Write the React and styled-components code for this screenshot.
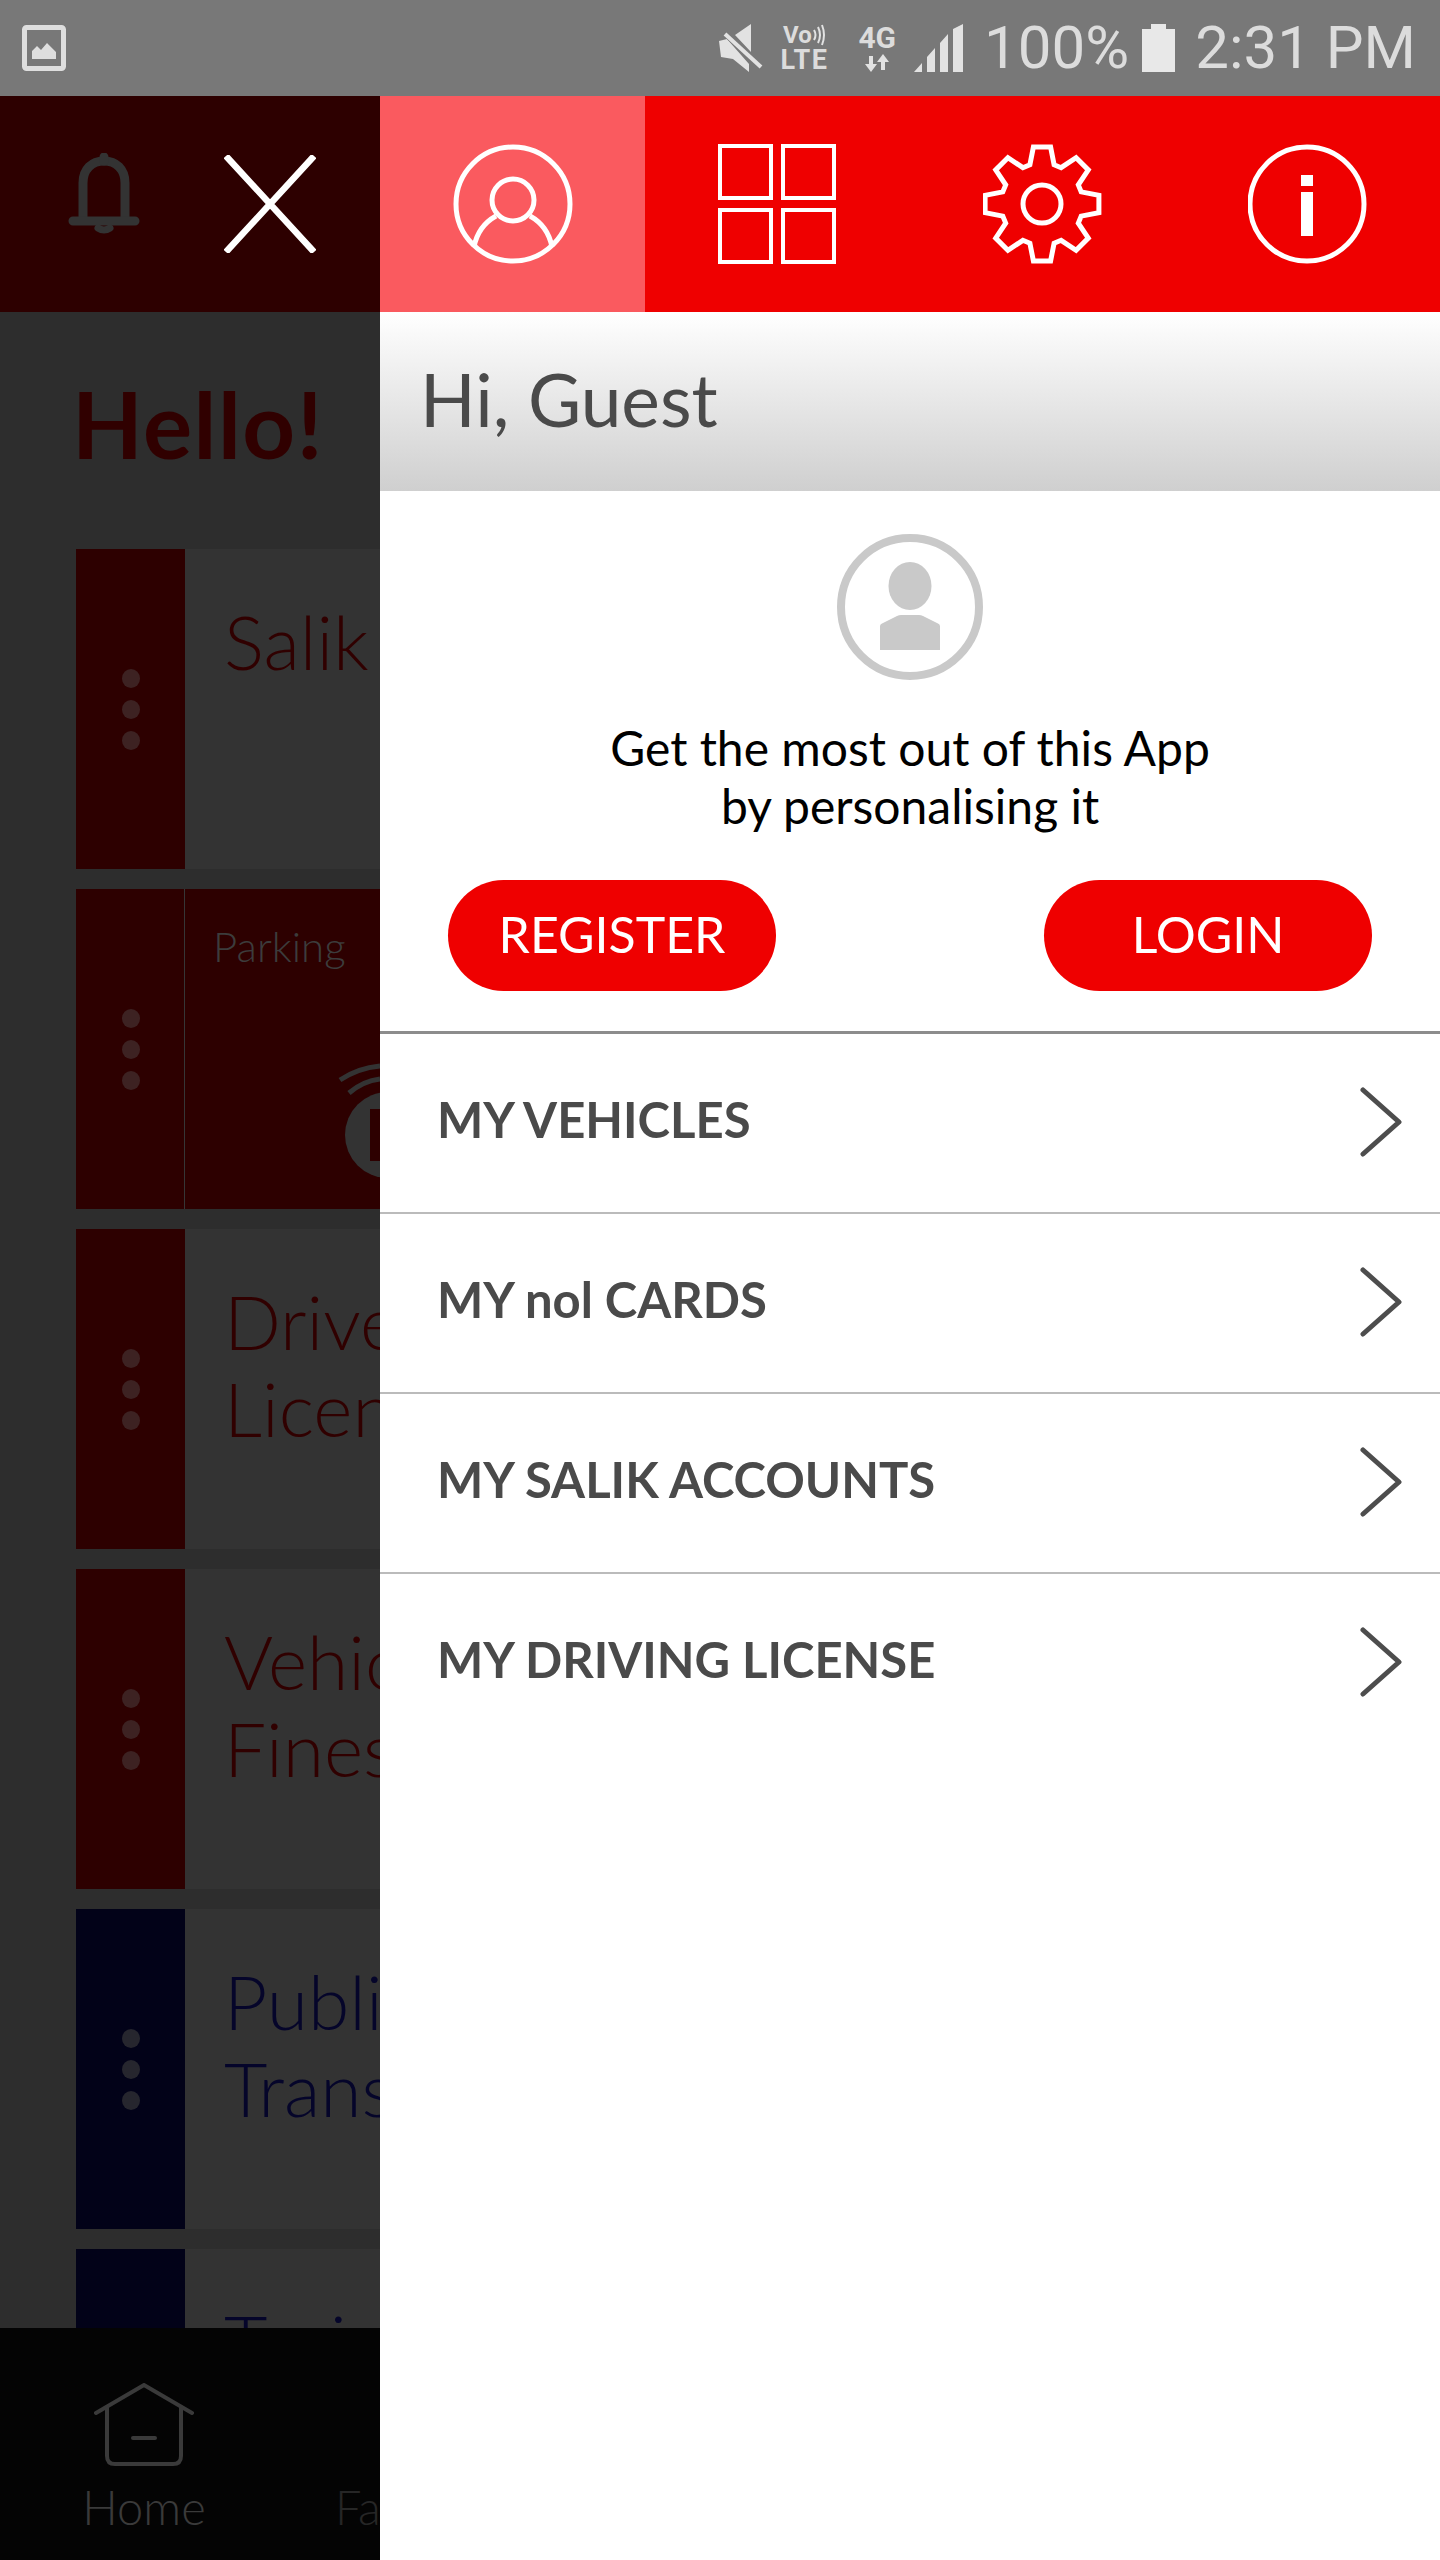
import React from 'react';
import styled, { createGlobalStyle } from 'styled-components';

const GlobalStyle = createGlobalStyle`
  html, body {
    margin: 0;
    padding: 0;
    background: #fff;
  }
  * {
    box-sizing: border-box;
  }
`;

const Screen = styled.div`
  width: 1440px;
  height: 2560px;
  display: flex;
  flex-direction: column;
  overflow: hidden;
  font-family: Lato, 'Noto Sans', sans-serif;
`;

/* status bar */
const StatusBar = styled.div`
  height: 96px;
  flex: none;
  background: #787878;
  display: flex;
  align-items: center;
  padding: 0 24px 0 22px;
  color: #dcdcdc;
`;

const StatusRight = styled.div`
  margin-left: auto;
  display: flex;
  align-items: center;
`;

const StatusText = styled.span`
  font-family: Roboto, sans-serif;
  font-weight: 400;
  font-size: 60px;
  line-height: 96px;
  margin-left: ${props => props.$left}px;
  white-space: nowrap;
`;

const NetStack = styled.div`
  display: flex;
  flex-direction: column;
  align-items: center;
  margin-left: ${props => props.$left}px;
  font-family: Roboto, sans-serif;
  font-weight: 700;
  line-height: 1;
`;

const NetLine = styled.span`
  display: flex;
  align-items: center;
  height: ${props => props.$size}px;
  font-size: ${props => props.$size}px;
  letter-spacing: ${props => props.$spacing || 0}px;
`;

const StatusIcon = styled.svg`
  display: block;
  flex: none;
  margin-left: ${props => props.$left || 0}px;
`;

/* page behind the drawer */
const Body = styled.div`
  flex: 1;
  display: flex;
  min-height: 0;
`;

const BackPane = styled.div`
  width: 380px;
  flex: none;
  display: flex;
  flex-direction: column;
  background: #2d2d2d;
  overflow: hidden;
`;

const BackHeader = styled.div`
  height: 216px;
  flex: none;
  background: #2d0000;
  display: flex;
  align-items: flex-start;
  padding: 57px 0 0 68px;
`;

const CloseIcon = styled.svg`
  display: block;
  margin: 2px 0 0 84px;
`;

const BackContent = styled.div`
  flex: 1;
  min-height: 0;
  overflow: hidden;
  padding: 0 0 0 76px;
`;

const Hello = styled.h1`
  margin: 0 0 0 -4px;
  height: 237px;
  padding-top: 62px;
  font-size: 92px;
  line-height: 100px;
  font-weight: 700;
  letter-spacing: 1.5px;
  color: #300000;
`;

const Card = styled.div`
  position: relative;
  width: 1288px;
  height: 320px;
  margin-bottom: 20px;
  display: flex;
  background: ${props => (props.$filled ? '#2d0000' : '#333333')};
`;

const Stripe = styled.div`
  width: 109px;
  flex: none;
  background: ${props => props.$color};
  display: flex;
  flex-direction: column;
  align-items: center;
  justify-content: center;
  gap: 12px;
`;

const Dot = styled.span`
  width: 18px;
  height: 19px;
  border-radius: 50%;
  background: ${props => props.$color};
`;

const CardTitle = styled.div`
  padding: 49px 0 0 39px;
  font-size: 75px;
  line-height: 87px;
  font-weight: 300;
  color: ${props => props.$color};
`;

const ParkingBody = styled.div`
  flex: 1;
  border-left: 1px solid #363636;
  margin-left: -1px;
  padding: 33px 0 0 28px;
  font-size: 42px;
  line-height: 48px;
  font-weight: 300;
  color: #3c3c3c;
`;

const ParkingIcon = styled.svg`
  position: absolute;
  left: 262px;
  top: 172px;
`;

const BottomNav = styled.div`
  height: 232px;
  flex: none;
  background: #040404;
  display: flex;
  padding-top: 55px;
`;

const NavItem = styled.div`
  width: 144px;
  margin-left: ${props => props.$left}px;
  flex: none;
  display: flex;
  flex-direction: column;
  align-items: ${props => props.$align || 'center'};
  font-size: 47px;
  line-height: 50px;
  font-weight: 300;
  white-space: nowrap;
  color: ${props => props.$color};
`;

const NavIconSlot = styled.div`
  height: 99px;
`;

const NavIcon = styled.svg`
  display: block;
`;

/* drawer */
const Drawer = styled.div`
  flex: 1;
  display: flex;
  flex-direction: column;
  background: #fff;
`;

const TabBar = styled.div`
  height: 216px;
  flex: none;
  display: grid;
  grid-template-columns: repeat(4, 1fr);
  background: #ef0000;
`;

const Tab = styled.div`
  display: flex;
  align-items: center;
  justify-content: center;
  background: ${props => (props.$active ? '#fa5a5f' : 'transparent')};
`;

const Greeting = styled.div`
  height: 179px;
  flex: none;
  background: linear-gradient(#ffffff, #cfcfcf);
  padding: 0 0 6px 40px;
  display: flex;
  align-items: center;
  font-size: 73px;
  color: #4a4a4a;
`;

const Promo = styled.div`
  height: 540px;
  flex: none;
  display: flex;
  flex-direction: column;
  align-items: center;
  padding-top: 43px;
`;

const PromoText = styled.p`
  margin: 39px 0 0;
  font-size: 48px;
  line-height: 58px;
  text-align: center;
  color: #000;
`;

const ButtonRow = styled.div`
  width: 100%;
  display: flex;
  justify-content: space-between;
  padding: 0 68px;
  margin-top: 45px;
`;

const PillButton = styled.div`
  width: 328px;
  height: 111px;
  padding-bottom: 4px;
  border-radius: 56px;
  background: #ef0000;
  color: #fff;
  display: flex;
  align-items: center;
  justify-content: center;
  font-size: 50px;
`;

const MenuRow = styled.div`
  height: ${props => (props.$first ? 181 : 180)}px;
  flex: none;
  display: flex;
  align-items: center;
  justify-content: space-between;
  padding: 0 38px 0 57px;
  border-top: ${props => (props.$first ? '3px solid #8c8c8c' : '2px solid #bbbbbb')};
`;

const MenuLabel = styled.span`
  margin-bottom: 8px;
  font-size: 49px;
  font-weight: 700;
  color: #4a4a4a;
`;

const ChevronIcon = styled.svg`
  display: block;
  margin-bottom: 2px;
`;

function ProfileIcon() {
  return (
    <svg width="120" height="120" viewBox="0 0 120 120" fill="none" stroke="#fff" strokeWidth="5">
      <circle cx="60" cy="60" r="57" />
      <circle cx="60" cy="56" r="21" />
      <path d="M21 103 Q25 82 43 72 M99 103 Q95 82 77 72" />
    </svg>
  );
}

function GridIcon() {
  return (
    <svg width="120" height="120" viewBox="0 0 120 120" fill="none" stroke="#fff" strokeWidth="4">
      <rect x="2" y="2" width="51" height="52" />
      <rect x="65" y="2" width="51" height="52" />
      <rect x="2" y="66" width="51" height="52" />
      <rect x="65" y="66" width="51" height="52" />
    </svg>
  );
}

function gearPath() {
  const points = [];
  for (let k = 0; k < 8; k++) {
    const a = (k * Math.PI) / 4;
    [[-0.30, 41], [-0.15, 57.5], [0.15, 57.5], [0.30, 41]].forEach(([off, r]) => {
      points.push(`${(59 + r * Math.cos(a + off)).toFixed(1)} ${(60 + r * Math.sin(a + off)).toFixed(1)}`);
    });
  }
  return `M${points.join(' L')} Z`;
}

function GearIcon() {
  return (
    <svg width="120" height="120" viewBox="0 0 120 120" fill="none" stroke="#fff" strokeWidth="5">
      <path d={gearPath()} />
      <circle cx="59" cy="60" r="19" />
    </svg>
  );
}

function InfoIcon() {
  return (
    <svg width="120" height="120" viewBox="0 0 120 120" fill="none">
      <circle cx="59" cy="60" r="57" stroke="#fff" strokeWidth="5" />
      <rect x="53" y="31" width="12" height="11" fill="#fff" />
      <rect x="53" y="48" width="12" height="44" fill="#fff" />
    </svg>
  );
}

function Chevron() {
  return (
    <ChevronIcon width="42" height="70" viewBox="0 0 42 70" fill="none" stroke="#4d4d4d" strokeWidth="5" strokeLinecap="round" strokeLinejoin="round">
      <path d="M3 3 L39 35 L3 67" />
    </ChevronIcon>
  );
}

function Avatar() {
  return (
    <svg width="146" height="146" viewBox="0 0 146 146" style={{ flex: 'none' }}>
      <circle cx="73" cy="73" r="69" fill="none" stroke="#c9c9c9" strokeWidth="8" />
      <ellipse cx="73" cy="52" rx="21.5" ry="24" fill="#c9c9c9" />
      <path d="M43 116 V92 Q43 90 46 89 L60 82 Q62 81 64 81 H82 Q84 81 86 82 L100 89 Q103 90 103 92 V116 Z" fill="#c9c9c9" />
    </svg>
  );
}

const cards = [
  { stripe: '#2d0000', dot: '#3d2222', lines: ['Salik'], color: '#300000' },
  { stripe: '#2d0000', dot: '#3d2222', parking: true },
  { stripe: '#2d0000', dot: '#3d2222', lines: ['Drivers', 'Licence'], color: '#300000' },
  { stripe: '#2d0000', dot: '#3d2222', lines: ['Vehicle', 'Fines'], color: '#300000' },
  { stripe: '#020218', dot: '#26262e', lines: ['Public', 'Transport'], color: '#05052a' },
  { stripe: '#020218', dot: '#26262e', lines: ['Taxi'], color: '#05052a' },
];

const menu = ['MY VEHICLES', 'MY nol CARDS', 'MY SALIK ACCOUNTS', 'MY DRIVING LICENSE'];

export default function App() {
  return (
    <Screen>
      <GlobalStyle />
      <StatusBar>
        <StatusIcon width="44" height="46" viewBox="0 0 44 46">
          <rect x="2.5" y="2.5" width="39" height="41" rx="2" fill="none" stroke="#dedede" strokeWidth="5" />
          <path d="M10 34 V26 L15 21 L19 25 L25 18 L34 27 V34 Z" fill="#dedede" />
        </StatusIcon>
        <StatusRight>
          <StatusIcon width="46" height="48" viewBox="0 0 46 48">
            <path d="M2 17 L10 15 L32 40 L32 48 L16 35 L4 33 Z M18 11 L34 0 V28 Z" fill="#e2e2e2" />
            <path d="M4 8 L44 44" stroke="#787878" strokeWidth="3" />
            <path d="M8 10 L44 43" stroke="#e2e2e2" strokeWidth="4" />
          </StatusIcon>
          <NetStack $left={17}>
            <NetLine $size={24}>
              Vo
              <svg width="14" height="22" viewBox="0 0 14 22" fill="none" stroke="#e2e2e2" strokeWidth="2">
                <path d="M2 6 Q5 11 2 16 M6 3 Q10 11 6 19 M10 1 Q14 11 10 21" />
              </svg>
            </NetLine>
            <NetLine $size={27} $spacing={1.5}>LTE</NetLine>
          </NetStack>
          <NetStack $left={30}>
            <NetLine $size={30}>4G</NetLine>
            <svg width="24" height="20" viewBox="0 0 24 20" fill="#e2e2e2">
              <path d="M4 3 H8 V11 H12 L6 19 L0 11 H4 Z M16 17 H20 V9 H24 L18 1 L12 9 H16 Z" />
            </svg>
          </NetStack>
          <StatusIcon $left={18} width="49" height="48" viewBox="0 0 49 48" fill="#e2e2e2">
            <path d="M0 48 L8 39 V48 Z M13 48 V33 L21 24 V48 Z M26 48 V19 L34 10 V48 Z M39 48 V5 L49 0 V48 Z" />
          </StatusIcon>
          <StatusText $left={21}>100%</StatusText>
          <StatusIcon $left={13} width="33" height="48" viewBox="0 0 33 48" fill="#e8e8e8">
            <path d="M0 5 H9 V0 H24 V5 H33 V48 H0 Z" />
          </StatusIcon>
          <StatusText $left={20}>2:31 PM</StatusText>
        </StatusRight>
      </StatusBar>

      <Body>
        <BackPane>
          <BackHeader>
            <svg width="72" height="82" viewBox="0 0 72 82" fill="none" stroke="#333" strokeWidth="9" strokeLinecap="round">
              <path d="M15 66 V30 C15 16 24 8 36 8 C48 8 57 16 57 30 V66" />
              <path d="M5 68 H67 M36 4 V8" />
              <path d="M30 75 Q36 79 42 75" strokeWidth="7" />
            </svg>
            <CloseIcon width="92" height="98" viewBox="0 0 92 98" fill="none" stroke="#fff" strokeWidth="6.5">
              <path d="M2 1 L90 97 M90 1 L2 97" />
            </CloseIcon>
          </BackHeader>
          <BackContent>
            <Hello>Hello!</Hello>
            {cards.map((card, i) => (
              <Card key={i} $filled={card.parking}>
                <Stripe $color={card.stripe}>
                  <Dot $color={card.dot} />
                  <Dot $color={card.dot} />
                  <Dot $color={card.dot} />
                </Stripe>
                {card.parking ? (
                  <>
                    <ParkingBody>Parking</ParkingBody>
                    <ParkingIcon width="110" height="120" viewBox="0 0 110 120" fill="none">
                      <path d="M2 19 Q20 7 42 5 M11 32 Q25 20 42 18" stroke="#333" strokeWidth="5" />
                      <circle cx="50" cy="74" r="43" fill="#333" />
                      <path d="M32 48 H70 V100 H32 Z" fill="#2d0000" />
                    </ParkingIcon>
                  </>
                ) : (
                  <CardTitle $color={card.color}>
                    {card.lines.map(line => (
                      <div key={line}>{line}</div>
                    ))}
                  </CardTitle>
                )}
              </Card>
            ))}
          </BackContent>
          <BottomNav>
            <NavItem $left={72} $color="#3a3a3a">
              <NavIconSlot>
                <NavIcon width="100" height="83" viewBox="0 0 100 83" fill="none" stroke="#3a3a3a" strokeWidth="4" strokeLinecap="round">
                  <path d="M2 30 L50 2 L98 30" />
                  <path d="M13 24 V73 Q13 81 21 81 H79 Q87 81 87 73 V24" />
                  <path d="M39 55 H61" />
                </NavIcon>
              </NavIconSlot>
              Home
            </NavItem>
            <NavItem $left={119} $align="flex-start" $color="#262626">
              <NavIconSlot />
              Favourites
            </NavItem>
          </BottomNav>
        </BackPane>

        <Drawer>
          <TabBar>
            <Tab $active><ProfileIcon /></Tab>
            <Tab><GridIcon /></Tab>
            <Tab><GearIcon /></Tab>
            <Tab><InfoIcon /></Tab>
          </TabBar>
          <Greeting>Hi, Guest</Greeting>
          <Promo>
            <Avatar />
            <PromoText>
              Get the most out of this App
              <br />
              by personalising it
            </PromoText>
            <ButtonRow>
              <PillButton>REGISTER</PillButton>
              <PillButton>LOGIN</PillButton>
            </ButtonRow>
          </Promo>
          {menu.map((item, i) => (
            <MenuRow key={item} $first={i === 0}>
              <MenuLabel>{item}</MenuLabel>
              <Chevron />
            </MenuRow>
          ))}
        </Drawer>
      </Body>
    </Screen>
  );
}
